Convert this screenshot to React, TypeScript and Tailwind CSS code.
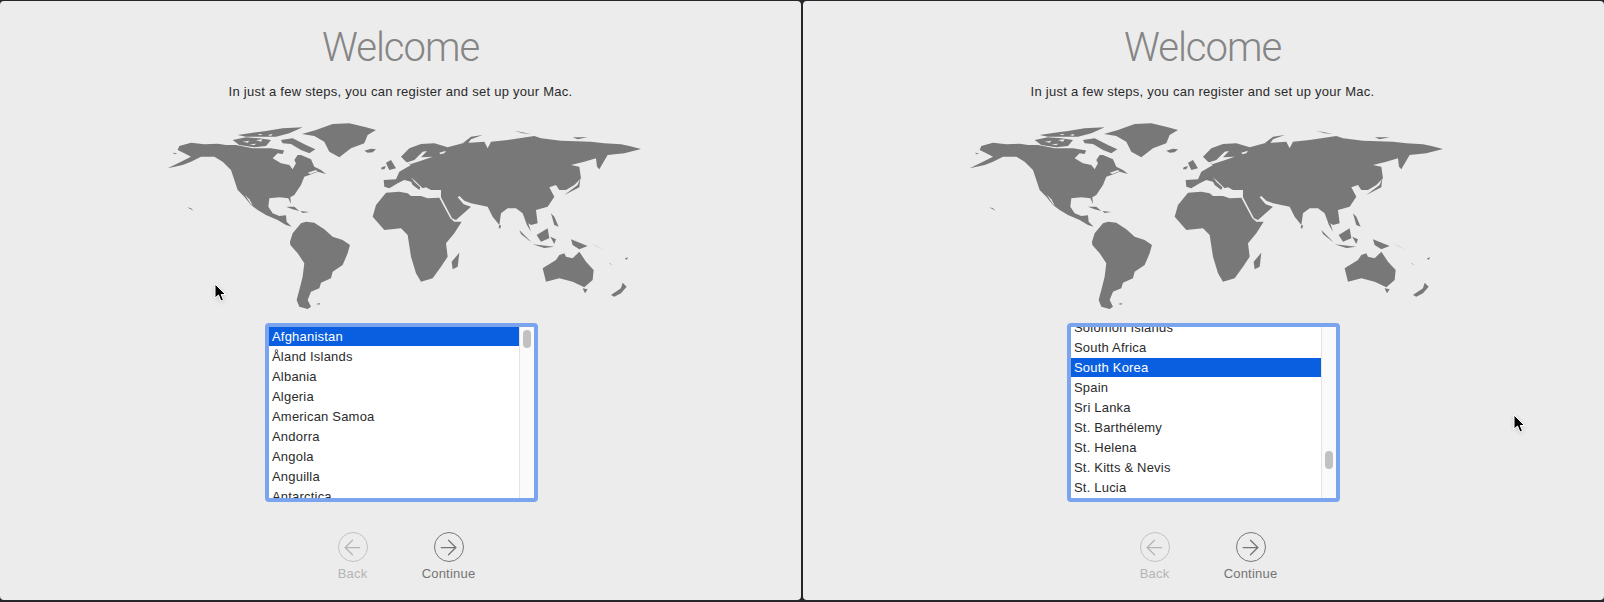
import React from 'react';
import { ArrowLeft, ArrowRight } from 'lucide-react';

// outlines are in 3x crop coordinates, scaled down inside the svg
const AMERICAS = [
  'M85 108L120 98L160 103L200 101L225 105L255 105L305 115L360 115L405 122L435 135L450 135L480 148L490 170L510 180L525 192L500 185L475 195L460 200L450 225L430 255L418 262L420 282L412 265L385 262L355 265L352 290L365 310L385 318L405 316L407 335L422 350L405 345L380 330L345 315L320 300L300 285L280 260L260 240L250 210L240 180L215 155L190 140L150 140L120 155L95 165L50 175L90 155L120 140L100 130L80 120Z',
  'M417 395L425 370L450 340L465 335L490 338L520 358L545 380L575 390L597 405L590 430L575 465L545 485L540 505L510 518L505 535L480 545L470 570L480 590L470 597L445 590L437 570L445 540L455 500L460 460L440 430L418 405Z',
  'M453 72L495 60L545 42L595 40L645 52L675 60L650 75L640 100L600 115L565 142L535 125L520 95L490 78Z',
  'M245 90L285 82L325 85L360 90L345 108L310 112L265 105Z',
  'M260 75L305 68L345 63L395 55L455 52L415 70L375 80L325 80L285 80Z',
  'M390 90L425 85L465 105L493 118L475 130L450 120L420 102L395 100Z',
  'M640 122L660 116L675 118L665 127L650 128Z',
  'M405 290L430 290L445 303L425 298Z',
  'M448 303L475 306L455 309Z',
  'M108 292L120 295L128 302L118 297Z',
  'M65 128L78 130L72 133Z',
  'M495 582L508 579L505 584Z',
];

const AMERICAS_WATER = [
  'M365 145L380 130L395 132L400 120L420 108L450 125L440 135L430 150L435 160L425 178L415 165L390 160Z',
  'M282 255L295 268L306 288L298 280Z',
  'M275 95L295 92L290 98Z',
  'M315 90L335 88L330 95Z',
  'M295 103L315 101L310 106Z',
  'M350 75L365 72L360 78Z',
  'M320 72L335 72L328 76Z',
  'M470 188L495 180L500 184L478 192Z',
];

const EURASIA_AFRICA = [
  'M-22 210L-20 230L-5 235L20 220L40 210L60 215L65 225L85 240L88 232L70 215L60 202L75 215L95 235L105 232L120 240L150 240L150 262L183 325L195 330L240 290L218 283L200 262L205 258L220 272L240 280L290 290L305 320L325 345L330 310L350 295L375 295L395 310L408 345L420 365L412 340L420 345L440 340L435 300L470 290L490 260L475 232L495 225L505 240L525 240L550 225L570 205L565 170L540 165L580 155L615 145L618 170L625 178L650 135L700 130L750 117L715 108L690 103L640 100L600 95L510 92L450 85L430 78L350 90L300 95L290 115L280 95L215 100L170 112L130 100L90 102L55 115L30 140L45 155L60 165L25 185L15 208Z',
  'M-55 320L-45 285L-15 248L25 245L50 250L60 258L90 258L110 265L145 263L178 325L190 335L212 335L190 370L165 400L170 440L150 470L125 505L90 515L75 490L60 440L50 375L30 355L-20 360Z',
  'M205 428L200 470L185 478L182 455Z',
  'M455 475L462 470L495 450L505 435L520 430L525 440L545 445L565 425L585 455L608 480L605 510L580 532L545 515L505 505L465 515Z',
  'M575 535L590 538L582 550Z',
  'M660 555L690 535L695 518L707 530L690 550L670 560Z',
  'M385 360L420 395L435 405L415 392L390 372Z',
  'M425 403L490 410L460 414Z',
  'M437 375L470 355L475 385L450 395Z',
  'M478 380L495 388L490 402Z',
  'M540 388L590 408L565 418L545 405Z',
  'M480 310L490 320L503 350L490 345Z',
  'M520 255L560 225L568 205L565 232Z',
  'M215 100L240 80L275 75L240 88L230 102Z',
  'M370 62L420 72L395 70Z',
  'M545 82L590 82L560 88Z',
  'M600 400L640 420L615 408Z',
  'M0 150L15 175L-5 180L-10 170L-15 158Z',
  'M-28 172L-15 168L-20 178L-30 178Z',
  'M325 345L330 346L328 356L323 353Z',
  'M655 458L665 465L658 462Z',
  'M702 445L712 442L706 450Z',
];

const EURASIA_WATER = [
  'M45 158L70 150L95 125L108 123L90 142L125 140L90 152L60 162Z',
  'M145 128L165 122L160 130L148 133Z',
];

function WorldMap() {
  return (
    <svg viewBox="150 115 500 195" className="w-[500px] h-[195px] block mt-[15px] blur-[0.4px]" aria-hidden="true">
      <g fill="#787878" transform="translate(150 110) scale(0.3333)">
        {AMERICAS.map((d) => <path key={d} d={d} />)}
        {AMERICAS_WATER.map((d) => <path key={d} d={d} fill="#ececec" />)}
      </g>
      <g fill="#787878" transform="translate(390 110) scale(0.3333)">
        {EURASIA_AFRICA.map((d) => <path key={d} d={d} />)}
        {EURASIA_WATER.map((d) => <path key={d} d={d} fill="#ececec" />)}
      </g>
    </svg>
  );
}

function Cursor({ className }: { className: string }) {
  return (
    <svg viewBox="0 0 13 20" className={`absolute w-[13px] h-5 drop-shadow-sm ${className}`} aria-hidden="true">
      <path d="M1 1L1 15L4.5 12L7 18L9.5 17L7.2 11.5L11.5 11.5Z" fill="#000" stroke="#fff" strokeWidth="1" />
    </svg>
  );
}

interface CountryListProps {
  items: string[];
  selected: string;
  scrollClass: string;
  thumbClass: string;
}

function CountryList({ items, selected, scrollClass, thumbClass }: CountryListProps) {
  return (
    <div className="w-[273px] h-[179px] mt-[13px] ml-[2px] border-[4px] border-[#7aa5ee] rounded-[4px] bg-white flex overflow-hidden">
      <div className="w-[250px] overflow-hidden">
        <ul className={scrollClass}>
          {items.map((name) => (
            <li
              key={name}
              className={`h-5 pl-[3px] text-[13px] leading-[19px] tracking-[0.2px] ${
                name === selected ? 'bg-[#0a5fe0] text-white font-medium border-b border-white' : 'text-[#2b2b2b]'
              }`}
            >
              {name}
            </li>
          ))}
        </ul>
      </div>
      <div className="flex-1 bg-[#fafafa] border-l border-[#e4e4e4] pl-[3px]">
        <div className={`w-2 h-[18px] rounded-full bg-[#c1c1c1] ${thumbClass}`} />
      </div>
    </div>
  );
}

function NavButton({ label, Icon, dim }: { label: string; Icon: React.ElementType; dim?: boolean }) {
  return (
    <div className={`w-24 flex flex-col items-center ${dim ? 'text-[#b4b4b4]' : 'text-[#747474]'}`}>
      <div className={`w-[30px] h-[30px] rounded-full border-[1.75px] flex items-center justify-center ${dim ? 'border-[#c2c2c2]' : 'border-[#777777]'}`}>
        <Icon size={25} strokeWidth={1.2} className="shrink-0" />
      </div>
      <span className="mt-[4px] text-[13px] leading-4 tracking-[0.2px]">{label}</span>
    </div>
  );
}

interface PanelProps {
  items: string[];
  selected: string;
  scrollClass: string;
  thumbClass: string;
  cursorClass: string;
  extraClass?: string;
}

function Panel({ items, selected, scrollClass, thumbClass, cursorClass, extraClass = '' }: PanelProps) {
  return (
    <section className={`relative w-[801px] bg-[#ececec] rounded-[4px] flex flex-col items-center ${extraClass}`}>
      <h1 className="mt-[23px] text-[40px] leading-[48px] tracking-[-1px] font-light text-[#858585] font-['Roboto',sans-serif]">Welcome</h1>
      <p className="mt-[12px] text-[13px] leading-4 tracking-[0.26px] text-[#2a2a2a]">In just a few steps, you can register and set up your Mac.</p>
      <WorldMap />
      <CountryList items={items} selected={selected} scrollClass={scrollClass} thumbClass={thumbClass} />
      <div className="mt-[30px] flex">
        <NavButton label="Back" Icon={ArrowLeft} dim />
        <NavButton label="Continue" Icon={ArrowRight} />
      </div>
      <Cursor className={cursorClass} />
    </section>
  );
}

const LEFT_ITEMS = ['Afghanistan', 'Åland Islands', 'Albania', 'Algeria', 'American Samoa', 'Andorra', 'Angola', 'Anguilla', 'Antarctica'];
const RIGHT_ITEMS = ['Solomon Islands', 'South Africa', 'South Korea', 'Spain', 'Sri Lanka', 'St. Barthélemy', 'St. Helena', 'St. Kitts & Nevis', 'St. Lucia', 'St. Martin'];

export default function App() {
  return (
    <div className="w-[1604px] h-[602px] bg-[#26262a] pt-px pb-[2px] flex gap-[2px] overflow-hidden font-['Liberation_Sans',sans-serif]">
      <Panel
        items={LEFT_ITEMS}
        selected="Afghanistan"
        scrollClass="mt-0"
        thumbClass="mt-[3px]"
        cursorClass="left-[214px] top-[282px]"
      />
      <Panel
        items={RIGHT_ITEMS}
        selected="South Korea"
        scrollClass="-mt-[9px]"
        thumbClass="mt-[124px]"
        cursorClass="left-[710px] top-[413px]"
        extraClass="pr-[2px]"
      />
    </div>
  );
}
